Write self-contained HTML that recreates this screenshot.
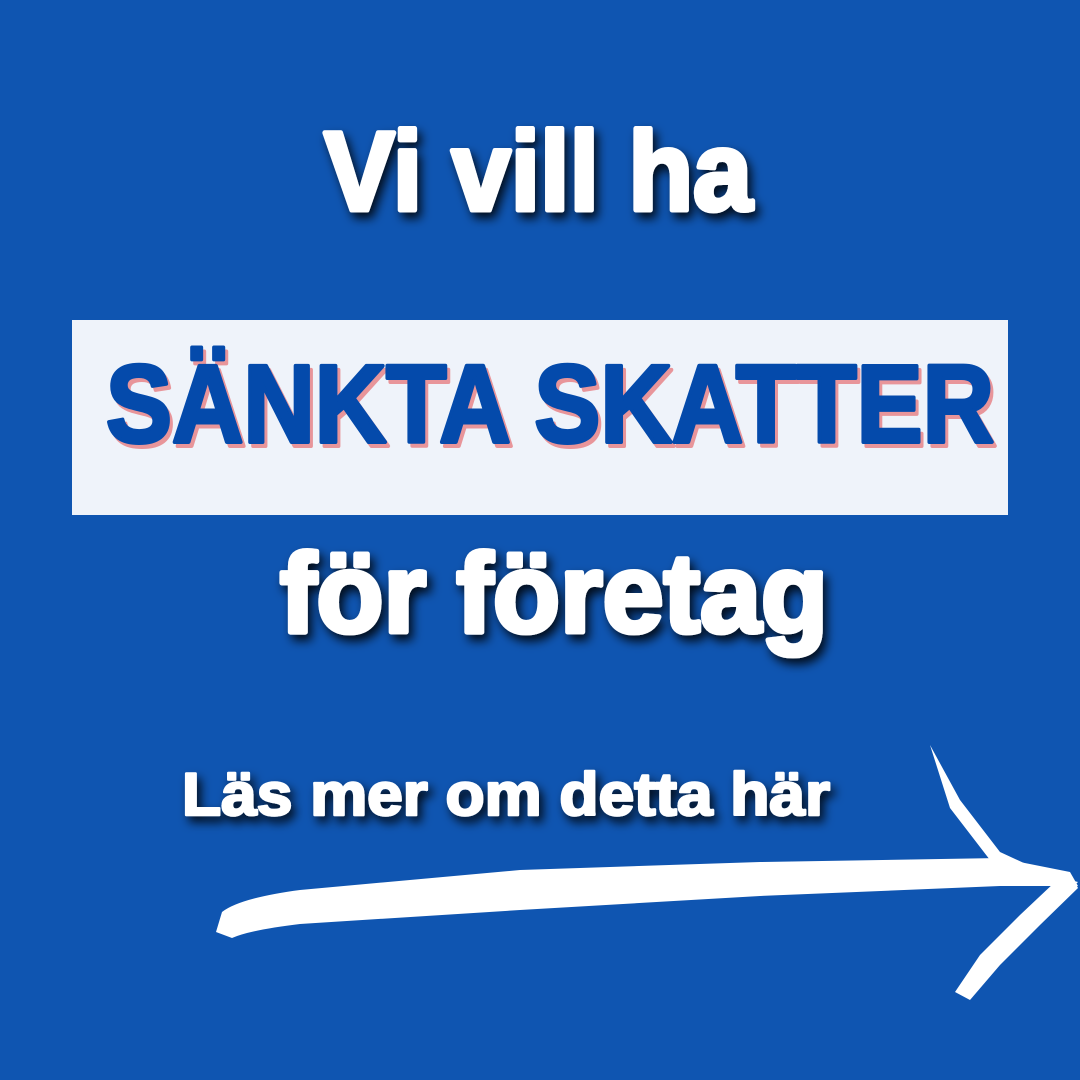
<!DOCTYPE html>
<html><head><meta charset="utf-8"><style>
html,body{margin:0;padding:0;background:#0f55b1;}
svg{display:block}
</style></head><body>
<svg width="1080" height="1080" viewBox="0 0 1080 1080" xmlns="http://www.w3.org/2000/svg">
<defs>
<filter id="sh" x="-10%" y="-30%" width="120%" height="160%">
<feGaussianBlur in="SourceAlpha" stdDeviation="5"/>
<feOffset dx="4" dy="6" result="b"/>
<feFlood flood-color="#000" flood-opacity="0.85"/>
<feComposite in2="b" operator="in"/>
<feMerge><feMergeNode/><feMergeNode in="SourceGraphic"/></feMerge>
</filter>
</defs>
<rect width="1080" height="1080" fill="#0f55b1"/>
<g font-family="Liberation Sans, sans-serif" font-weight="bold" fill="#fff" stroke="#fff" stroke-linejoin="round" filter="url(#sh)">
<text x="324" y="210" font-size="112" stroke-width="5" textLength="428" lengthAdjust="spacingAndGlyphs">Vi vill ha</text>
<text x="280" y="632" font-size="112" stroke-width="5" textLength="548" lengthAdjust="spacingAndGlyphs">för företag</text>
<text x="182" y="815" font-size="60" stroke-width="2.5" textLength="648" lengthAdjust="spacingAndGlyphs">Läs mer om detta här</text>
</g>
<rect x="72" y="320" width="936" height="195" fill="#eff3fa"/>
<g font-family="Liberation Sans, sans-serif" font-weight="bold" font-size="110" stroke-width="4" stroke-linejoin="round">
<text x="109" y="446" fill="#e8959a" stroke="#e8959a" textLength="888" lengthAdjust="spacingAndGlyphs">SÄNKTA SKATTER</text>
<text x="106" y="442" fill="#044aab" stroke="#044aab" textLength="888" lengthAdjust="spacingAndGlyphs">SÄNKTA SKATTER</text>
</g>
<g fill="#fff">
<path d="M222 912 Q240 898 300 890 L520 870 L760 862 L1000 858 L1070 872 L1078 886 L1000 886 L760 896 L520 910 L300 924 Q250 930 232 938 L216 932 Z"/>
<path d="M930 745 L960 800 L1000 852 L1050 875 L1078 882 L1070 890 L1040 880 L990 860 L950 808 Z"/>
<path d="M1072 876 L1078 888 L1040 925 L1000 965 L970 1000 L955 992 L980 955 L1020 915 L1055 882 Z"/>
</g>
</svg>
</body></html>
